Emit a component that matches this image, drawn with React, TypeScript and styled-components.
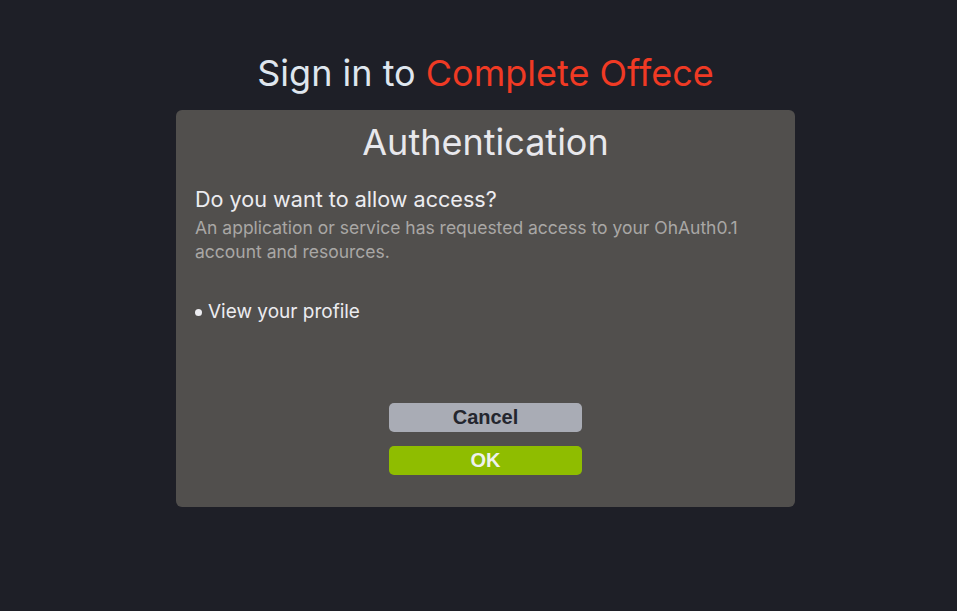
import React from "react";
import styled, { createGlobalStyle } from "styled-components";

const Global = createGlobalStyle`
  html, body { margin: 0; padding: 0; background: #1e1f27; }
  body { font-family: Inter, "Noto Sans", sans-serif; }
`;

const Page = styled.div`
  min-height: 611px;
  display: flex;
  flex-direction: column;
  align-items: center;
  padding-top: 50px;
  padding-left: 14px;
  box-sizing: border-box;
`;

const Title = styled.h1`
  margin: 0;
  font-size: 36px;
  line-height: 46px;
  font-weight: 400;
  color: #dfe6ee;
  letter-spacing: 0;
`;

const Accent = styled.span`
  color: #f03a24;
`;

const Card = styled.div`
  margin-top: 14px;
  width: 619px;
  height: 397px;
  box-sizing: border-box;
  background: #514f4d;
  border-radius: 6px;
  padding: 10px 19px 32px;
  display: flex;
  flex-direction: column;
`;

const CardTitle = styled.h2`
  margin: 0;
  text-align: center;
  font-size: 36px;
  line-height: 44px;
  font-weight: 400;
  color: #e8e8ec;
`;

const Question = styled.h3`
  margin: 21px 0 0;
  font-size: 21.6px;
  line-height: 28px;
  font-weight: 400;
  color: #ececf0;
`;

const Description = styled.p`
  margin: 3px 0 0;
  font-size: 17.5px;
  line-height: 24px;
  color: #a9a7a5;
  max-width: 570px;
`;

const Scopes = styled.ul`
  list-style: none;
  margin: 35px 0 0;
  padding: 0;
`;

const Scope = styled.li`
  font-size: 19px;
  line-height: 26px;
  color: #ececf0;
  display: flex;
  align-items: center;
  gap: 6px;
`;

const Dot = styled.span`
  width: 7px;
  height: 7px;
  border-radius: 50%;
  background: #ececf0;
  flex-shrink: 0;
`;

const Actions = styled.div`
  margin-top: auto;
  display: flex;
  flex-direction: column;
  align-items: center;
  gap: 14px;
`;

const Button = styled.button<{ $primary?: boolean }>`
  width: 193px;
  height: 29px;
  border: none;
  border-radius: 5px;
  padding: 0;
  font-family: "Liberation Sans", Arial, sans-serif;
  font-weight: 700;
  font-size: 20px;
  cursor: pointer;
  background: ${(p) => (p.$primary ? "#8fbd00" : "#a9acb5")};
  color: ${(p) => (p.$primary ? "#eef2ee" : "#24262e")};
`;

export default function App() {
  return (
    <>
      <Global />
      <Page>
        <Title>
          Sign in to <Accent>Complete Offece</Accent>
        </Title>
        <Card>
          <CardTitle>Authentication</CardTitle>
          <Question>Do you want to allow access?</Question>
          <Description>
            An application or service has requested access to your OhAuth0.1
            account and resources.
          </Description>
          <Scopes>
            <Scope>
              <Dot />
              View your profile
            </Scope>
          </Scopes>
          <Actions>
            <Button>Cancel</Button>
            <Button $primary>OK</Button>
          </Actions>
        </Card>
      </Page>
    </>
  );
}
